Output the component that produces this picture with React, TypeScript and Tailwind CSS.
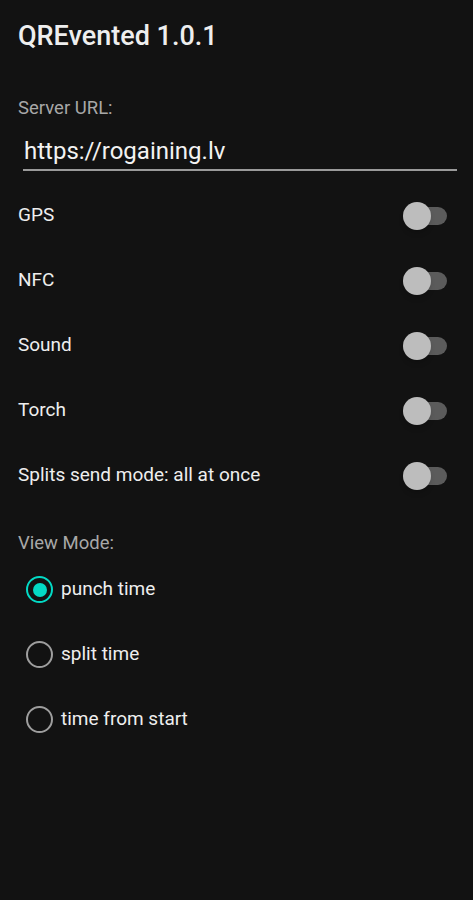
import React, { useState } from 'react';

const Switch: React.FC<{ on: boolean; onToggle: () => void }> = ({ on, onToggle }) => (
  <button type="button" onClick={onToggle} className="relative w-[44px] h-[30px] flex items-center">
    <span className={`absolute right-0 w-[37px] h-[18px] rounded-full ${on ? 'bg-[#0e7d73]' : 'bg-[#5b5b5b]'}`} />
    <span
      className={`absolute w-[28px] h-[28px] rounded-full shadow-md ${on ? 'right-0 bg-[#03dac5]' : 'left-0 bg-[#bdbdbd]'}`}
    />
  </button>
);

const Radio: React.FC<{ checked: boolean }> = ({ checked }) => (
  <span
    className={`w-[27px] h-[27px] rounded-full border-[2.5px] flex items-center justify-center ${
      checked ? 'border-[#03dac5]' : 'border-[#9e9e9e]'
    }`}
  >
    {checked && <span className="w-[14px] h-[14px] rounded-full bg-[#03dac5]" />}
  </span>
);

const toggles = ['GPS', 'NFC', 'Sound', 'Torch', 'Splits send mode: all at once'];
const modes = ['punch time', 'split time', 'time from start'];

const App: React.FC = () => {
  const [switches, setSwitches] = useState<boolean[]>(toggles.map(() => false));
  const [mode, setMode] = useState(0);

  return (
    <div className="w-[473px] h-[900px] bg-[#121212] text-white font-['Roboto',sans-serif] pl-[18px] pr-[26px]">
      <h1 className="pt-[19px] text-[27px] leading-[34px] font-medium text-[#eeeeee]">QREvented 1.0.1</h1>
      <div className="mt-[43px] text-[18.5px] text-[#a8a8a8] leading-[24px]">Server URL:</div>
      <div className="mt-[14px] ml-[5px] border-b-2 border-[#9a9a9a] pl-[1px] pb-[1px] mr-[-10px]">
        <input
          className="w-full bg-transparent outline-none text-[24px] leading-[34px] text-[#f2f2f2]"
          defaultValue="https://rogaining.lv"
        />
      </div>
      <div className="mt-[12px] flex flex-col">
        {toggles.map((label, i) => (
          <div key={label} className="h-[65px] flex items-center justify-between">
            <span className="text-[19px] text-[#eeeeee]">{label}</span>
            <Switch
              on={switches[i]}
              onToggle={() => setSwitches(s => s.map((v, j) => (j === i ? !v : v)))}
            />
          </div>
        ))}
      </div>
      <div className="mt-[23px] text-[18.5px] text-[#a8a8a8] leading-[24px]">View Mode:</div>
      <div className="mt-[2px] flex flex-col">
        {modes.map((label, i) => (
          <button
            key={label}
            type="button"
            onClick={() => setMode(i)}
            className="h-[65px] flex items-center gap-[8px] pl-[8px] text-left"
          >
            <Radio checked={mode === i} />
            <span className="text-[19px] text-[#eeeeee]">{label}</span>
          </button>
        ))}
      </div>
    </div>
  );
};

export default App;
